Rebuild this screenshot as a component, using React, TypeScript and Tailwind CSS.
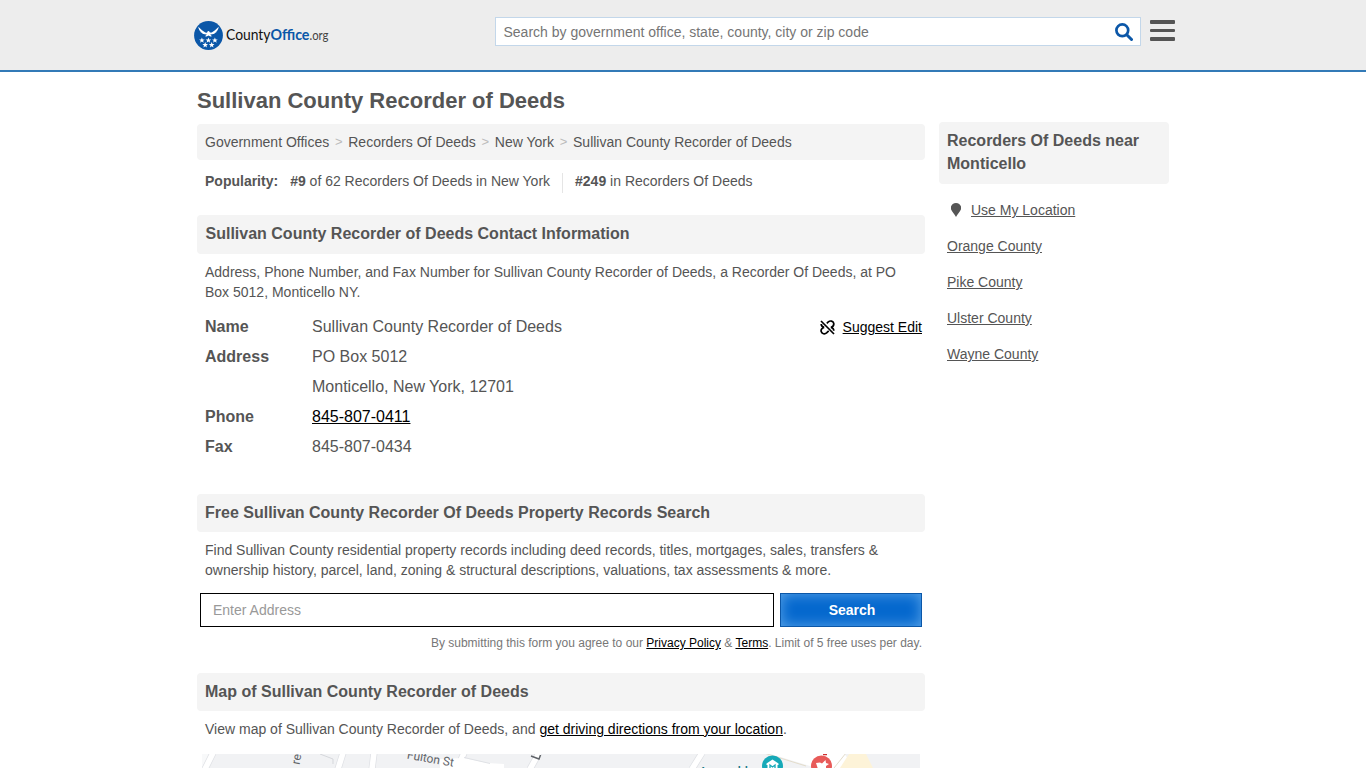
import React from "react";

const contact = [
  { label: "Name", value: "Sullivan County Recorder of Deeds" },
  { label: "Address", value: "PO Box 5012" },
  { label: "", value: "Monticello, New York, 12701" },
  { label: "Phone", value: "845-807-0411", link: true },
  { label: "Fax", value: "845-807-0434" },
];

const counties = ["Orange County", "Pike County", "Ulster County", "Wayne County"];

function Star({ x, y }: { x: number; y: number }) {
  return (
    <path
      transform={`translate(${x} ${y})`}
      d="M0-2.9.8-.9 2.800-.9 1.200.4 1.800 2.400 0 1.200-1.800 2.400-1.200.4-2.800-.9-.8-.9Z"
    />
  );
}

function Logo() {
  return (
    <a className="flex h-[30px] items-center">
      <svg width="29" height="29" viewBox="0 0 29 29" className="shrink-0">
        <circle cx="14.500" cy="14.500" r="14.400" fill="#0b57a8" />
        <g fill="#fff">
          <path d="M4.300 5.800 8 9.300 11.300 11.600 13 11.700 13.700 10.200 14.900 10 16 11.600 17.700 11.600 21 9.300 24.700 5.800C24.500 8 23.600 9.600 22.400 10.600L22.600 11 20.600 12.200 20.500 12.700 18.200 13.300 16.200 13.500 18 15.200 16.400 15.600 14.500 14.600 12.600 15.600 11 15.200 12.800 13.500 10.800 13.300 8.500 12.700 8.400 12.200 6.400 11 6.600 10.600C5.400 9.600 4.500 8 4.300 5.800Z" />
          <Star x={7.9} y={19.4} />
          <Star x={14.4} y={19.4} />
          <Star x={20.9} y={19.4} />
          <Star x={11.2} y={24} />
          <Star x={17.7} y={24} />
        </g>
      </svg>
      <svg width="108" height="24" viewBox="0 0 108 24" className="ml-[2px] shrink-0 font-['Lato','Liberation_Sans',sans-serif]">
        <text x="1" y="17" fontSize="14.500" fill="#111" textLength="44.500" lengthAdjust="spacingAndGlyphs">County</text>
        <text x="45.500" y="17" fontSize="14.500" fontWeight="700" fill="#0b57a8" textLength="39" lengthAdjust="spacingAndGlyphs">Office</text>
        <text x="84.500" y="17" fontSize="14" fill="#444" textLength="19" lengthAdjust="spacingAndGlyphs">.org</text>
      </svg>
    </a>
  );
}

function Heading({ children, className = "h-[38px]" }: { children: React.ReactNode; className?: string }) {
  return (
    <h2 className={`rounded-[4px] bg-[#f4f4f4] px-2 text-base leading-[37px] font-bold ${className}`}>
      {children}
    </h2>
  );
}

function MapStrip() {
  return (
    <svg width="718" height="14" viewBox="0 0 718 14" className="mt-[15px] ml-[5px] block font-['Roboto',sans-serif]">
      <rect width="718" height="14" fill="#f1f2f4" />
      <path d="M0 0h8L0 14Z" fill="#f8f9fa" />
      <path d="M11-1 3 15M141-1 136 15M172-1 170 15M262-1 259 6M337-1 328 15M500-1 490 15" stroke="#dfe1e5" strokeWidth="7" />
      <path d="M11-1 3 15M141-1 136 15M172-1 170 15M262-1 259 6M337-1 328 15M500-1 490 15" stroke="#fff" strokeWidth="5.5" />
      <path d="M118 0 131 5V10" fill="none" stroke="#d5d7db" />
      <path d="M238 5 262 4 285 9 302 10V14H238Z" fill="#fff" />
      <path d="M262 3.500 288 9.500" stroke="#dfe1e5" />
      <path d="M562-2 608 12 614 14H652L642-1Z" fill="#fff" />
      <path d="M562-1 604 12M632 14 644-1" fill="none" stroke="#e3dccb" />
      <path d="M647 0h17l7 14h-33Z" fill="#fdf3d8" />
      <text transform="translate(97.500 11) rotate(-80)" fontSize="12" fill="#5f6368">re</text>
      <text transform="translate(204.500 4.500) rotate(10)" fontSize="12" fill="#5f6368">Fulton St</text>
      <path d="m329 2 8 3 1.500-4" fill="none" stroke="#5f6368" strokeWidth="1.400" />
      <text x="497" y="21.500" fontSize="12.500" fontWeight="500" fill="#147a86">Assembly</text>
      <circle cx="570.500" cy="12" r="10.500" fill="#16a9b8" />
      <path d="m570.500 5.500 6 4v1.500h-1v4h-10v-4h-1V9.500Z" fill="#fff" />
      <path d="M568 14v-3l2.500 2 2.500-2v3" fill="none" stroke="#16a9b8" strokeWidth="1.300" />
      <circle cx="619.500" cy="12" r="10.500" fill="#e85b59" />
      <path d="m614 9 4-.5 2 1 3.500-3.500.5 3 3 1-3 2v3h-8Z" fill="#fff" />
      <path d="M621 .5h4" stroke="#d0302f" strokeWidth="1.500" />
    </svg>
  );
}

export default function App() {
  return (
    <div className="h-[768px] overflow-hidden bg-white font-['Liberation_Sans',Arial,sans-serif] text-sm leading-5 text-[#555]">
      <header className="flex h-[72px] items-start border-b-2 border-[#337ab7] bg-[#ededed] pl-[194px]">
        <div className="mt-5 w-[301px]">
          <Logo />
        </div>
        <div className="mt-[17px] flex h-[29px] w-[646px] items-center justify-between border border-[#c3d7ea] bg-white pr-[7px] pl-[7.500px] text-[#757575]">
          <span>Search by government office, state, county, city or zip code</span>
          <svg width="18" height="18" viewBox="0 0 18 18" fill="none" stroke="#0b57a8">
            <circle cx="7.300" cy="7.300" r="5.900" strokeWidth="2.700" />
            <path d="m12 12 4.500 4.500" strokeWidth="3" strokeLinecap="round" />
          </svg>
        </div>
        <div className="mt-5 ml-[9px] flex w-[25px] flex-col gap-[5px]">
          <span className="h-[4px] rounded-[1px] bg-[#555]" />
          <span className="h-[3px] rounded-[1px] bg-[#555]" />
          <span className="h-[4px] rounded-[1px] bg-[#555]" />
        </div>
      </header>

      <div className="flex gap-[14px] pl-[197px]">
        <main className="w-[728px]">
          <h1 className="mt-[13px] h-[39px] text-[22px] leading-8 font-bold">Sullivan County Recorder of Deeds</h1>
          <nav className="flex h-9 items-center rounded-[4px] bg-[#f4f4f4] pl-2">
            <a>Government Offices</a>
            <span className="w-[19px] text-center text-[13px] text-[#bbb]">&gt;</span>
            <a>Recorders Of Deeds</a>
            <span className="w-[19px] text-center text-[13px] text-[#bbb]">&gt;</span>
            <a>New York</a>
            <span className="w-[19px] text-center text-[13px] text-[#bbb]">&gt;</span>
            <a>Sullivan County Recorder of Deeds</a>
          </nav>
          <div className="mt-[13px] flex h-5 pl-2 leading-[17px]">
            <b className="mr-3">Popularity:</b>
            <span className="mr-3"><b>#9</b> of 62 Recorders Of Deeds in New York</span>
            <span className="border-l border-[#e5e5e5] pl-3"><b>#249</b> in Recorders Of Deeds</span>
          </div>

          <Heading className="mt-[22px] h-[39px] pl-[8.500px]">Sullivan County Recorder of Deeds Contact Information</Heading>
          <p className="mt-2 w-[712px] pl-2">
            Address, Phone Number, and Fax Number for Sullivan County Recorder of Deeds, a Recorder Of Deeds, at PO<br />
            Box 5012, Monticello NY.
          </p>
          <div className="mt-[10px] flex justify-between pr-[3px] pl-2">
            <dl className="text-base leading-[30px]">
              {contact.map((row) => (
                <div key={row.value} className="flex h-[30px]">
                  <dt className="w-[107px] font-bold">{row.label}</dt>
                  <dd className={row.link ? "text-black underline" : ""}>{row.value}</dd>
                </div>
              ))}
            </dl>
            <a className="flex h-[30px] items-center text-black">
              <svg width="15" height="15" viewBox="0 0 15 15" fill="none" stroke="#000" strokeWidth="1.700" className="mr-2">
                <path d="M1 1 14 14M6.800 3.300 8.300 1.900C10.200.3 13.200 1 13.700 3.300c.4 2-1 3.600-2.900 4.200M4.200 7.400C1.900 7.900.7 9.800 1.200 11.600c.6 2.300 3.600 2.900 5.400 1.300l2.100-2M4.200 7.400C2.400 7 1.200 5.800 1.200 4.100M10.800 7.500c1.800.3 3 1.600 3 3.300" />
              </svg>
              <span className="underline">Suggest Edit</span>
            </a>
          </div>

          <Heading className="mt-8 h-[38px]">Free Sullivan County Recorder Of Deeds Property Records Search</Heading>
          <p className="mt-2 pl-2">
            Find Sullivan County residential property records including deed records, titles, mortgages, sales, transfers &amp;<br />
            ownership history, parcel, land, zoning &amp; structural descriptions, valuations, tax assessments &amp; more.
          </p>
          <form className="mt-[13px] flex gap-[6px] px-[3px]">
            <input className="h-[34px] w-[574px] border border-black px-3 placeholder:text-[#999]" placeholder="Enter Address" />
            <button type="button" className="h-[34px] w-[142px] border border-[#0b57a8] bg-[#0568ce] pl-[2px] font-bold text-white shadow-[inset_0_0_14px_0px_#5ba5e8]">
              Search
            </button>
          </form>
          <p className="mt-[6px] pr-[3px] text-right text-xs leading-5 text-[#777]">
            By submitting this form you agree to our <a className="text-black underline">Privacy Policy</a> &amp; <a className="text-black underline">Terms</a>. Limit of 5 free uses per day.
          </p>

          <Heading className="mt-5 h-[38px]">Map of Sullivan County Recorder of Deeds</Heading>
          <p className="mt-2 pl-2">
            View map of Sullivan County Recorder of Deeds, and <a className="text-black underline">get driving directions from your location</a>.
          </p>
          <MapStrip />
        </main>

        <aside className="mt-[50px] w-[230px]">
          <h2 className="h-[62px] rounded-[4px] bg-[#f4f4f4] px-2 pt-[7px] text-base leading-[23px] font-bold">
            Recorders Of Deeds near Monticello
          </h2>
          <ul className="mt-2 pl-2 leading-9">
            <li className="flex h-9 items-center">
              <svg width="10" height="14" viewBox="0 0 10 14" className="mr-[10px] ml-1" fill="#555">
                <path d="M5 0c3 0 5.200 2.200 5.200 5 0 3-3.700 5.500-5.200 9C3.500 10.500-.2 8-.2 5c0-2.800 2.200-5 5.200-5Z" />
              </svg>
              <a className="underline">Use My Location</a>
            </li>
            {counties.map((name) => (
              <li key={name} className="h-9"><a className="underline">{name}</a></li>
            ))}
          </ul>
        </aside>
      </div>
    </div>
  );
}
